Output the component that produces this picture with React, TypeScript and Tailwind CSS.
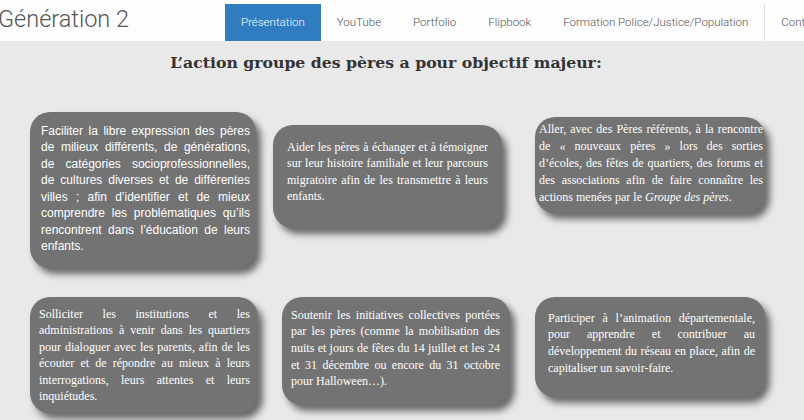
const navItems = ['Présentation', 'YouTube', 'Portfolio', 'Flipbook', 'Formation Police/Justice/Population'];

const cardBase =
  'rounded-[20px] bg-[#737373] text-white text-justify text-[12px] shadow-[5px_6px_7px_rgba(0,0,0,0.55)]';
const serif = "font-[family-name:'Liberation_Serif','DejaVu_Serif',serif]";

export default function App() {
  return (
    <div className="h-[420px] w-[804px] overflow-hidden bg-[#e9e9e9] font-[family-name:Roboto,sans-serif]">
      <header className="flex h-[41px] items-end overflow-hidden bg-[#fdfdfd]">
        <div className="ml-[-2px] flex h-full w-[227px] shrink-0 items-center pb-[2px] text-[23.5px] font-light text-[#555]">
          Génération 2
        </div>
        <nav className="flex h-[37px] shrink-0 whitespace-nowrap text-[11.5px] font-light text-[#555]">
          {navItems.map((item, i) => (
            <div
              key={item}
              className={
                i === 0
                  ? 'flex items-center bg-[#2f7cc1] px-4 text-white'
                  : 'flex items-center px-4'
              }
            >
              {item}
            </div>
          ))}
          <div className="flex items-center border-l border-[#ddd] px-4">Contact</div>
        </nav>
      </header>

      <h1 className="mt-[10px] pr-[32px] text-center text-[15.7px] font-bold text-[#333] font-[family-name:'DejaVu_Serif',serif]">
        L’action groupe des pères a pour objectif majeur:
      </h1>

      <div className="mt-[37px] flex items-start">
        <div
          className={`${cardBase} ml-[30px] h-[156px] w-[226px] pl-[11px] pr-[6px] pt-[11px] leading-[16.5px] font-[family-name:'Liberation_Sans',Arial,sans-serif]`}
        >
          Faciliter la libre expression des pères de milieux différents, de générations, de catégories socioprofessionnelles, de cultures diverses et de différentes villes ; afin d’identifier et de mieux comprendre les problématiques qu’ils rencontrent dans l’éducation de leurs enfants.
        </div>
        <div className={`${cardBase} ${serif} ml-[17px] mt-[13px] h-[103px] w-[229px] px-[14px] pt-[14px] text-[12.3px] leading-[16.5px]`}>
          Aider les pères à échanger et à témoigner sur leur histoire familiale et leur parcours migratoire afin de les transmettre à leurs enfants.
        </div>
        <div className={`${cardBase} ${serif} ml-[33px] mt-[5px] h-[96px] w-[230px] pl-[4px] pr-[2px] pt-[4px] leading-[17px]`}>
          Aller, avec des Pères référents, à la rencontre de « nouveaux pères » lors des sorties d’écoles, des fêtes de quartiers, des forums et des associations afin de faire connaître les actions menées par le <i>Groupe des pères</i>.
        </div>
      </div>

      <div className="mt-[29px] flex items-start">
        <div className={`${cardBase} ${serif} ml-[30px] h-[116px] w-[228px] pl-[9px] pr-[8px] pt-[9px] leading-[16.5px]`}>
          Solliciter les institutions et les administrations à venir dans les quartiers pour dialoguer avec les parents, afin de les écouter et de répondre au mieux à leurs interrogations, leurs attentes et leurs inquiétudes.
        </div>
        <div className={`${cardBase} ${serif} ml-[24px] h-[108px] w-[228px] pl-[9px] pr-[10px] pt-[10px] leading-[16.7px]`}>
          Soutenir les initiatives collectives portées par les pères (comme la mobilisation des nuits et jours de fêtes du 14 juillet et les 24 et 31 décembre ou encore du 31 octobre pour Halloween…).
        </div>
        <div className={`${cardBase} ${serif} ml-[25px] h-[100px] w-[230px] pl-[13px] pr-[10px] pt-[13px] leading-[16.8px]`}>
          Participer à l’animation départementale, pour apprendre et contribuer au développement du réseau en place, afin de capitaliser un savoir-faire.
        </div>
      </div>
    </div>
  );
}
